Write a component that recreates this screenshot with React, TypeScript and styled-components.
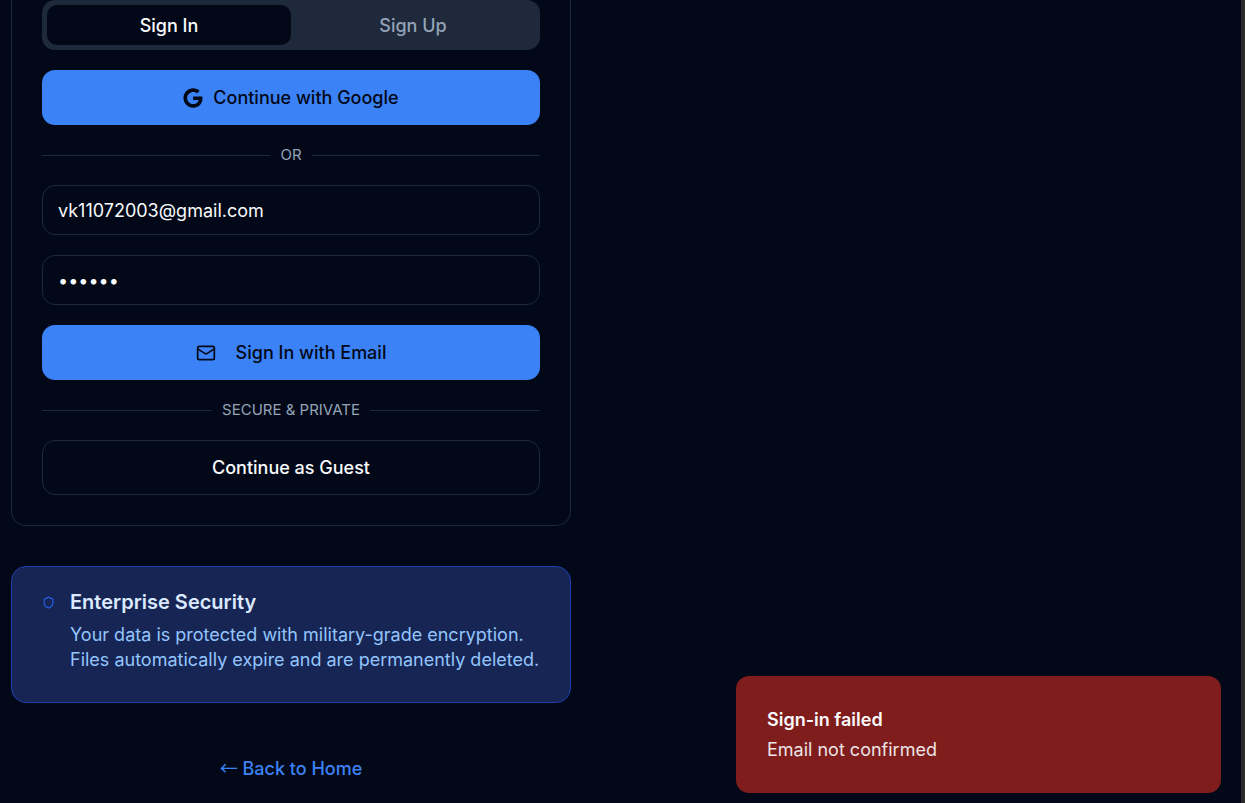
import React, { useState } from "react";
import styled, { createGlobalStyle } from "styled-components";
import { Mail, Shield } from "lucide-react";

const GlobalStyle = createGlobalStyle`
  *, *::before, *::after { box-sizing: border-box; }
  body {
    margin: 0;
    background: #020817;
    color: #f8fafc;
    font-family: Inter, "Liberation Sans", sans-serif;
    font-size: 18px;
    line-height: 25px;
  }
  button, input { font: inherit; }
  h2, p { margin: 0; }
`;

const Page = styled.div`
  display: flex;
  min-height: 100vh;
  overflow: hidden;
  background: #020817;
  border-right: 4px solid #2b2b2b;
`;

const Column = styled.main`
  flex: 0 1 582px;
  display: flex;
  flex-direction: column;
  gap: 40px;
  padding: 0 11px 20px;
`;

const Card = styled.section`
  display: flex;
  flex-direction: column;
  gap: 20px;
  padding: 0 30px 30px;
  border: 1px solid #1e293b;
  border-top: 0;
  border-radius: 0 0 15px 15px;
`;

const Tabs = styled.div`
  display: grid;
  grid-template-columns: 1fr 1fr;
  padding: 5px;
  border-radius: 13px;
  background: #1e293b;
`;

const Tab = styled.button<{ $active: boolean }>`
  height: 40px;
  padding: 0;
  border: 0;
  border-radius: 10px;
  background: ${({ $active }) => ($active ? "#020817" : "transparent")};
  color: ${({ $active }) => ($active ? "#f8fafc" : "#94a3b8")};
  font-weight: 500;
`;

const Form = styled.form`
  display: flex;
  flex-direction: column;
  gap: 20px;
`;

const Action = styled.button<{ $outline?: boolean; $gap?: number }>`
  display: flex;
  align-items: center;
  justify-content: center;
  gap: ${({ $gap }) => $gap ?? 10}px;
  height: 55px;
  padding: 0 40px;
  border: ${({ $outline }) => ($outline ? "1px solid #1e293b" : "0")};
  border-radius: 13px;
  background: ${({ $outline }) => ($outline ? "#020817" : "#3b82f6")};
  color: ${({ $outline }) => ($outline ? "#f8fafc" : "#020817")};
  font-weight: 500;
`;

const Field = styled.input`
  width: 100%;
  height: 50px;
  padding: 0 15px;
  border: 1px solid #1e293b;
  border-radius: 13px;
  outline: none;
  background: #020817;
  color: #f8fafc;
`;

const Divider = styled.div`
  display: flex;
  align-items: center;
  gap: 10px;
  height: 20px;
  color: #94a3b8;
  font-size: 15px;
  line-height: 20px;
  text-transform: uppercase;

  &::before, &::after {
    content: "";
    flex: 1;
    height: 1px;
    background: #1e293b;
  }
`;

const Notice = styled.section`
  display: flex;
  gap: 15px;
  padding: 20px 30px 30px;
  border: 1px solid #1e40af;
  border-radius: 15px;
  background: #172554;
`;

const NoticeIcon = styled(Shield)`
  flex: none;
  margin-top: 9px;
  color: #2563eb;
`;

const NoticeTitle = styled.h2`
  color: #dbeafe;
  font-size: 20px;
  font-weight: 600;
  line-height: 30px;
`;

const NoticeText = styled.p`
  padding-top: 5px;
  color: #93c5fd;
`;

const BackLink = styled.a`
  align-self: center;
  margin-top: 13px;
  color: #3b82f6;
  font-weight: 500;
  text-decoration: none;
`;

const Arrow = styled.span`
  font-family: "Noto Sans CJK JP", sans-serif;
  font-weight: 400;
  line-height: 1;
`;

const Toast = styled.div`
  position: fixed;
  right: 24px;
  bottom: 10px;
  width: 485px;
  max-width: calc(100vw - 48px);
  padding: 31px;
  border-radius: 13px;
  background: #7f1d1d;
`;

const ToastTitle = styled.p`
  font-weight: 600;
`;

const ToastText = styled.p`
  padding-top: 5px;
  opacity: 0.9;
`;

const GoogleIcon = () => (
  <svg width="20" height="20" viewBox="0 0 488 512" fill="currentColor" aria-hidden="true">
    <path d="M488 261.8C488 403.3 391.1 504 248 504 110.8 504 0 393.2 0 256S110.8 8 248 8c66.8 0 123 24.5 166.3 64.9l-67.5 64.9C258.5 52.6 94.3 116.6 94.3 256c0 86.5 69.1 156.6 153.7 156.6 98.2 0 135-70.4 140.8-106.9H248v-85.3h236.1c2.3 12.7 3.9 24.9 3.9 41.4z" />
  </svg>
);

export default function App() {
  const [mode, setMode] = useState("in");
  const [email, setEmail] = useState("vk11072003@gmail.com");
  const [password, setPassword] = useState("secret");

  return (
    <>
      <GlobalStyle />
      <Page>
        <Column>
          <Card>
            <Tabs role="tablist">
              <Tab type="button" role="tab" aria-selected={mode === "in"} $active={mode === "in"} onClick={() => setMode("in")}>Sign In</Tab>
              <Tab type="button" role="tab" aria-selected={mode === "up"} $active={mode === "up"} onClick={() => setMode("up")}>Sign Up</Tab>
            </Tabs>
            <Action type="button"><GoogleIcon />Continue with Google</Action>
            <Divider>Or</Divider>
            <Form onSubmit={(e) => e.preventDefault()}>
              <Field type="email" aria-label="Email" value={email} onChange={(e) => setEmail(e.target.value)} />
              <Field type="password" aria-label="Password" value={password} onChange={(e) => setPassword(e.target.value)} />
              <Action type="submit" $gap={20}><Mail size={20} aria-hidden="true" />Sign In with Email</Action>
            </Form>
            <Divider>Secure &amp; Private</Divider>
            <Action type="button" $outline>Continue as Guest</Action>
          </Card>
          <Notice>
            <NoticeIcon size={13} aria-hidden="true" />
            <div>
              <NoticeTitle>Enterprise Security</NoticeTitle>
              <NoticeText>Your data is protected with military-grade encryption. Files automatically expire and are permanently deleted.</NoticeText>
            </div>
          </Notice>
          <BackLink href="#home"><Arrow>←</Arrow> Back to Home</BackLink>
        </Column>
      </Page>
      <Toast role="alert">
        <ToastTitle>Sign-in failed</ToastTitle>
        <ToastText>Email not confirmed</ToastText>
      </Toast>
    </>
  );
}
